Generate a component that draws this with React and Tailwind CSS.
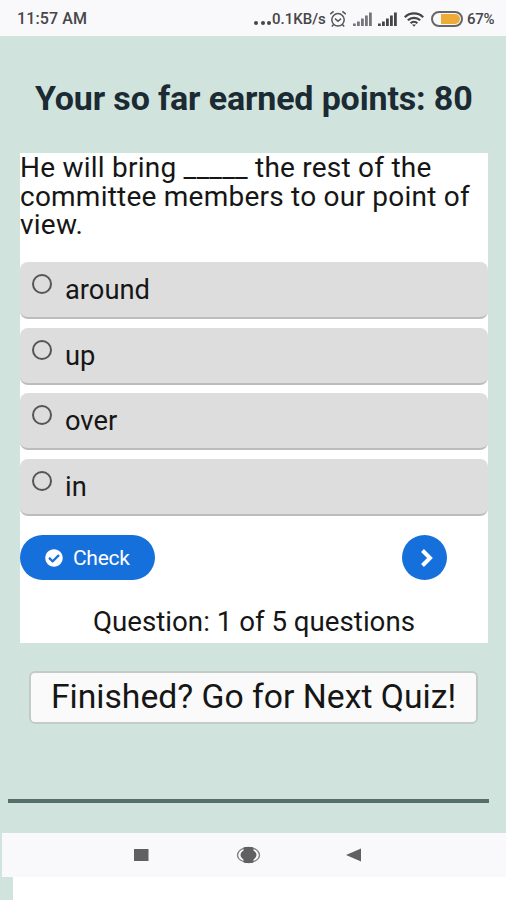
import { FaCheckCircle } from 'react-icons/fa';

const options = ['around', 'up', 'over', 'in'];

function Signal({ className }) {
  return (
    <svg className={className} width="20" height="14" viewBox="0 0 20 14">
      <rect x="0" y="11.5" width="2.8" height="2.5" />
      <rect x="4" y="9.5" width="2.8" height="4.5" />
      <rect x="8" y="6.5" width="2.8" height="7.5" />
      <rect x="12" y="3.5" width="2.8" height="10.5" />
      <rect x="16" y="0.5" width="2.8" height="13.5" />
    </svg>
  );
}

function AlarmIcon() {
  return (
    <svg
      className="ml-[3px] shrink-0"
      width="18"
      height="18"
      viewBox="0 0 18 18"
      fill="none"
      stroke="#555558"
      strokeWidth="1.5"
    >
      <circle cx="9" cy="9.8" r="6.2" />
      <path d="M1.2 4.2 4.6 1.4M16.8 4.2 13.4 1.4M4.6 14.6l-1.8 2M13.4 14.6l1.8 2" />
      <path d="M6 8.6l3 2.6 3-2.6" />
    </svg>
  );
}

function WifiIcon() {
  return (
    <svg
      className="ml-[6px] shrink-0"
      width="20"
      height="15"
      viewBox="0 0 20 15"
      fill="none"
      stroke="#444447"
      strokeWidth="2.2"
    >
      <path d="M.8 5.2a13.2 13.2 0 0 1 18.4 0" />
      <path d="M3.8 8.3a9 9 0 0 1 12.4 0" />
      <path d="M6.6 11.2a5 5 0 0 1 6.8 0" />
      <path d="M8 12.4h4l-2 2.4z" fill="#444447" stroke="none" />
    </svg>
  );
}

function StatusBar() {
  return (
    <header className="flex h-9 items-center bg-[#f9f9fb] pl-[17px] pr-2.5 pt-0.5 text-[#464649]">
      <span className="w-[72px] whitespace-nowrap text-[16px] font-medium tracking-[0.1px]">
        11:57 AM
      </span>
      <div className="ml-[165px] flex items-center gap-[2.5px] pt-2">
        <i className="size-[4px] rounded-full bg-[#464649]" />
        <i className="size-[4px] rounded-full bg-[#464649]" />
        <i className="size-[4px] rounded-full bg-[#464649]" />
      </div>
      <span className="ml-[1px] w-[54px] whitespace-nowrap text-[15px] font-medium">
        0.1KB/s
      </span>
      <AlarmIcon />
      <Signal className="ml-[6px] shrink-0 fill-[#77777a]" />
      <Signal className="ml-[5px] shrink-0 fill-[#464649]" />
      <WifiIcon />
      <div className="ml-[7px] flex h-4 w-8 shrink-0 items-center justify-end rounded-full border-2 border-[#66666a] p-px">
        <div className="h-full w-[19px] rounded-r-full bg-[#edab38]" />
      </div>
      <span className="ml-1 whitespace-nowrap text-[15px] font-medium tracking-[-0.3px]">
        67%
      </span>
    </header>
  );
}

function Option({ label }) {
  return (
    <label className="flex h-[57px] items-start rounded-lg border-b-2 border-[#bcbcbc] bg-[#dddddd] pl-3">
      <span className="mt-3 size-5 shrink-0 rounded-full border-[2.5px] border-[#555555]" />
      <span className="ml-[13px] mt-2.5 text-[27.3px] leading-9">{label}</span>
    </label>
  );
}

function NavBar() {
  return (
    <nav className="ml-0.5 h-11 bg-[#f9f9fb]">
      <svg width="504" height="44" viewBox="0 0 504 44" fill="#606062">
        <rect x="132" y="16" width="14.5" height="12" />
        <ellipse
          cx="246.5"
          cy="22"
          rx="11"
          ry="7.5"
          fill="none"
          stroke="#858588"
          strokeWidth="1.3"
        />
        <rect x="241.500" y="14" width="10" height="16" rx="2" />
        <ellipse cx="246.5" cy="22" rx="8" ry="5.5" />
        <path d="M344 22 359 15.500v13z" />
      </svg>
    </nav>
  );
}

export default function App() {
  return (
    <div className="h-[900px] w-[506px] overflow-hidden bg-[#d0e4dd] font-['Roboto',sans-serif] text-[#161616]">
      <StatusBar />
      <main className="flex h-[797px] flex-col px-5">
        <h1 className="ml-[15px] mt-[39px] whitespace-nowrap text-[34px] font-bold leading-[46px] tracking-[-0.15px] text-[#1b2a33]">
          Your so far earned points: 80
        </h1>
        <section className="mt-8 h-[490px] w-[468px] bg-white">
          <p className="h-[109px] whitespace-nowrap pt-px text-[28px] leading-[28.6px] tracking-[0.23px]">
            He will bring _____ the rest of the
            <br />
            committee members to our point of
            <br />
            view.
          </p>
          <div className="flex flex-col gap-[8.7px]">
            {options.map((option) => (
              <Option key={option} label={option} />
            ))}
          </div>
          <div className="mt-[19px] flex items-center justify-between pr-[41px]">
            <button className="flex h-[45px] w-[135px] items-center rounded-full bg-[#1670db] pl-[25px] text-[21px] tracking-[-0.3px] text-white">
              <FaCheckCircle className="mr-[10px] size-[18px]" />
              <span className="pt-0.5">Check</span>
            </button>
            <button className="flex size-[45px] items-center justify-center rounded-full bg-[#1670db] pl-1">
              <svg
                width="14"
                height="20"
                viewBox="0 0 14 20"
                fill="none"
                stroke="#fff"
                strokeWidth="4"
              >
                <path d="M2.500 2.500 10 10l-7.500 7.500" />
              </svg>
            </button>
          </div>
          <p className="mt-6 text-center text-[27.7px] leading-9">
            Question: 1 of 5 questions
          </p>
        </section>
        <button className="ml-[9px] mt-7 h-[53px] w-[449px] whitespace-nowrap rounded-md border-2 border-[#c3cac8] bg-[#fafafa] pb-px text-[33.7px] leading-none">
          Finished? Go for Next Quiz!
        </button>
        <hr className="-ml-3 mt-[75px] h-1 w-[481px] border-0 bg-[#55706b]" />
      </main>
      <NavBar />
      <div className="ml-[13px] h-6 bg-white" />
    </div>
  );
}
